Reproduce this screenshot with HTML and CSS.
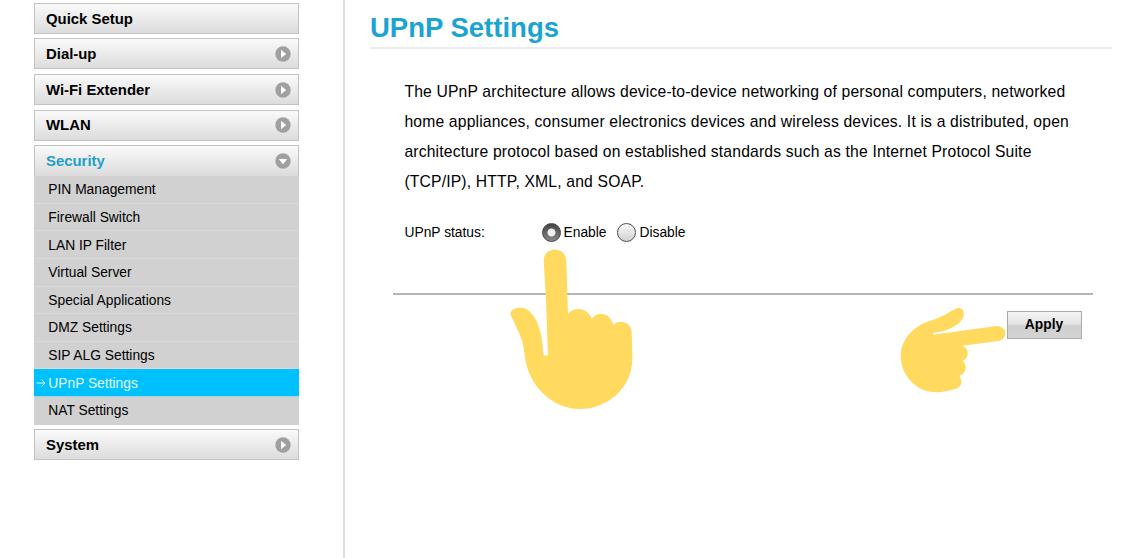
FILE: index.html
```html
<!DOCTYPE html>
<html lang="en">
<head>
    <meta charset="UTF-8">
    <meta name="viewport" content="width=device-width, initial-scale=1.0">
    <title>UPnP Settings</title>
    <link rel="stylesheet" href="styles.css">
</head>
<body>
    <div class="page">
        <nav class="sidebar">
            <a class="menu">Quick Setup</a>
            <a class="menu">Dial-up
                <svg class="arrow" viewBox="0 0 16 16"><circle cx="8" cy="8" r="7.7"/><path d="M6 3.8L11.2 8L6 12.2Z"/></svg>
            </a>
            <a class="menu">Wi-Fi Extender
                <svg class="arrow" viewBox="0 0 16 16"><circle cx="8" cy="8" r="7.7"/><path d="M6 3.8L11.2 8L6 12.2Z"/></svg>
            </a>
            <a class="menu">WLAN
                <svg class="arrow" viewBox="0 0 16 16"><circle cx="8" cy="8" r="7.7"/><path d="M6 3.8L11.2 8L6 12.2Z"/></svg>
            </a>
            <div class="group">
                <a class="menu open">Security
                    <svg class="arrow" viewBox="0 0 16 16"><circle cx="8" cy="8" r="7.7"/><path d="M3.8 6L12.2 6L8 11.2Z"/></svg>
                </a>
                <ul class="submenu">
                    <li>PIN Management</li>
                    <li>Firewall Switch</li>
                    <li>LAN IP Filter</li>
                    <li>Virtual Server</li>
                    <li>Special Applications</li>
                    <li>DMZ Settings</li>
                    <li>SIP ALG Settings</li>
                    <li class="active"><svg class="pointer" viewBox="0 0 10 10"><path d="M0.5 5H9M5.5 1.5L9 5L5.5 8.5"/></svg>UPnP Settings</li>
                    <li>NAT Settings</li>
                </ul>
            </div>
            <a class="menu">System
                <svg class="arrow" viewBox="0 0 16 16"><circle cx="8" cy="8" r="7.7"/><path d="M6 3.8L11.2 8L6 12.2Z"/></svg>
            </a>
        </nav>

        <main class="content">
            <h1>UPnP Settings</h1>
            <p class="description">
                The UPnP architecture allows device-to-device networking of personal computers, networked<br>
                home appliances, consumer electronics devices and wireless devices. It is a distributed, open<br>
                architecture protocol based on established standards such as the Internet Protocol Suite<br>
                (TCP/IP), HTTP, XML, and SOAP.
            </p>
            <form class="status">
                <span class="status-label">UPnP status:</span>
                <label><input type="radio" name="upnp" checked>Enable</label>
                <label><input type="radio" name="upnp">Disable</label>
            </form>
            <div class="actions">
                <button type="button">Apply</button>
            </div>
        </main>

        <!-- Hands pointing at the option and the button -->
        <svg class="hand hand-up" viewBox="0 0 124 162">
            <path d="M33.700 12C33.700 -3.500 56 -3.500 56.300 12L58 65C64 57.500 77 58 81.700 69.700C88 61.500 100 63.500 103.300 76C110 69.500 121 73.500 121.700 83L122.300 108C123 140 96 160 70 160C46 160 26 143 18 121C14 109 14.500 98 11.700 91C9 82 4 74 0.700 66C-0.500 61 5 58.700 11 58.700C24 59 33 80 33.300 106.500H38L36 51Z"/>
        </svg>
        <svg class="hand hand-right" viewBox="0 0 106 86">
            <path d="M33.300 26.700L96 18C107 17.500 109 31 98.300 33L62.700 37.700C69 41 70 49 62.700 53C67.500 57 67 65 59.300 68C63 72 62 79.500 55 81C49 82.500 43 84.300 36.700 84.300C15 84.300 0.700 66 0.700 48C0.700 31 14 18 30 12.700C42 9.500 49 4 56 0.500C61 -1.500 64.500 2 63.700 7C62.500 12 60 15 55 18C49 21.500 42 24 33.300 24.700Z"/>
        </svg>
    </div>
</body>
</html>
```
FILE: styles.css
```css
* {
    box-sizing: border-box;
}
body {
    margin: 0;
    background: #fff;
    color: #000;
    font-family: "Liberation Sans", Arial, sans-serif;
    font-size: 13.8px;
}
.page {
    position: relative;
    display: flex;
    height: 558px;
    overflow: hidden;
}
.sidebar {
    display: flex;
    flex-direction: column;
    gap: 4.6px;
    width: 345px;
    padding: 2.8px 44.5px 0 34px;
    border-right: 2px solid #e0e0e0;
}
.menu {
    display: flex;
    align-items: center;
    justify-content: space-between;
    height: 31px;
    padding: 0.6px 6.5px 0 11px;
    border: 1px solid #c3c3c3;
    background: linear-gradient(#fafafa, #dcdcdc);
    font-size: 14.9px;
    font-weight: bold;
}
.open {
    border-bottom-color: #ddd;
    color: #1f9fcc;
}
.arrow {
    width: 16px;
    height: 16px;
    fill: #a0a0a0;
}
.arrow path {
    fill: #fff;
}
.submenu {
    margin: 0;
    padding: 0;
    list-style: none;
    background: #d1d1d1;
}
.submenu li {
    display: flex;
    align-items: center;
    height: 27.6px;
    padding: 0.8px 0 0 14.3px;
    border-bottom: 1px solid #dadada;
}
.submenu .active {
    padding-left: 2.3px;
    border-bottom-color: #a5d3e0;
    background: #00c1ff;
    color: #e4f9ff;
}
.submenu li:last-child {
    padding-top: 0;
    border-bottom: 0;
}
.pointer {
    width: 10px;
    height: 10px;
    margin-right: 2px;
    fill: none;
    stroke: #d5f5ff;
}
.content {
    flex: 1;
    padding: 8px 12px 0 25px;
}
h1 {
    height: 41px;
    margin: 0;
    border-bottom: 2px solid #ececec;
    color: #1ba3d3;
    font-size: 27.5px;
    line-height: 39px;
}
.description {
    margin: 28px 0 0 34.4px;
    font-size: 15.7px;
    letter-spacing: 0.17px;
    line-height: 30px;
    white-space: nowrap;
}
.status {
    display: flex;
    align-items: center;
    height: 98px;
    margin: 0 19px 0 22.5px;
    padding: 0 0 26px 12px;
    border-bottom: 2px solid #b5b5b5;
}
.status-label {
    width: 137px;
}
.status label {
    display: flex;
    align-items: center;
    margin-right: 11px;
}
.status input {
    appearance: none;
    width: 19px;
    height: 19px;
    margin: 0 3px 0 0;
    border: 1.5px solid #505050;
    border-radius: 50%;
    background: linear-gradient(#fafafa, #d0d0d0);
}
.status input:checked {
    border-color: #444;
    background: radial-gradient(circle, #f0f0f0 3.5px, transparent 4.5px), linear-gradient(#444, #888);
}
.actions {
    display: flex;
    justify-content: flex-end;
    padding: 16px 30px 0 0;
}
button {
    width: 75px;
    height: 28px;
    padding: 0 1px 1px 0;
    border: 1px solid #aaa;
    background: linear-gradient(#f4f4f4 0%, #e4e4e4 45%, #cfcfcf 55%, #d4d4d4 100%);
    color: #000;
    font-family: inherit;
    font-size: 13.8px;
    font-weight: bold;
}
.hand {
    position: absolute;
    fill: #ffda5e;
}
.hand-up {
    left: 510px;
    top: 249px;
    width: 124px;
    height: 162px;
}
.hand-right {
    left: 900px;
    top: 308px;
    width: 106px;
    height: 86px;
}
```
